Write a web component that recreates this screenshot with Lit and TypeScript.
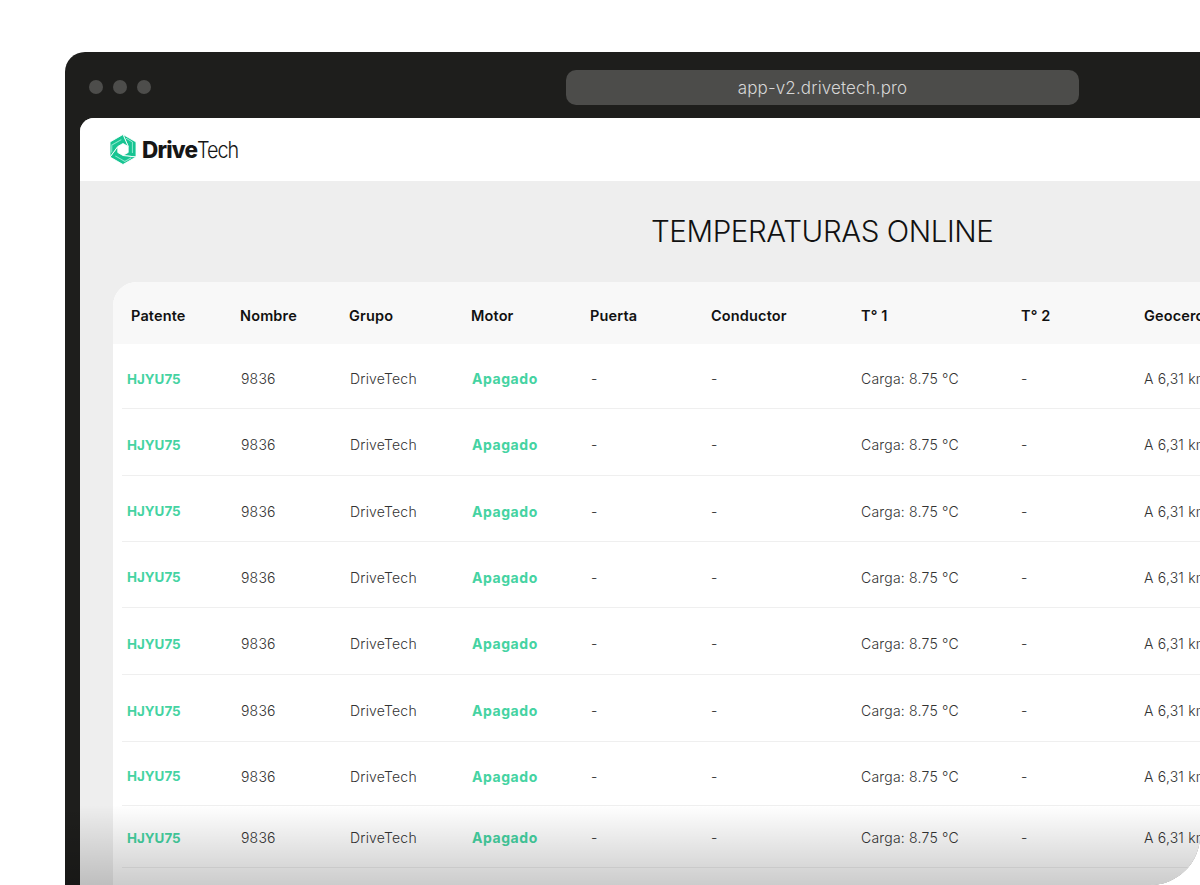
import { LitElement, html, css, svg } from "lit";
import { customElement } from "lit/decorators.js";

const ROWS = [65, 67, 66, 66, 67, 67, 64, 62];
const BAND = "14,.5 27,8 27,23 14,21.5 19.2,18.5 19.2,12.5";
const ANGLES = [0, 120, 240];

@customElement("app-root")
export class AppRoot extends LitElement {
  static styles = css`
    :host { display: block; width: 1200px; height: 885px; overflow: hidden; background: #fff; font-family: Inter, "Liberation Sans", sans-serif; position: relative; }
    .page { height: 885px; padding: 52px 0 0 65px; box-sizing: border-box; display: flex; }
    .frame { flex: 1; background: #1e1e1c; border-radius: 20px 0 50px 0; overflow: hidden; display: flex; flex-direction: column; position: relative; height: 833px; }
    .chrome { height: 66px; box-sizing: border-box; padding: 4px 0 0 24px; flex: none; display: flex; align-items: center; position: relative; gap: 10px; }
    .dot { width: 14px; height: 14px; border-radius: 50%; background: #4d4d4b; }
    .url { position: absolute; left: 501px; top: 18px; width: 513px; height: 35px; border-radius: 10px; background: #4c4c4a; color: #d6d6d6; font-size: 17px; letter-spacing: .13px; font-weight: 300; display: flex; align-items: center; justify-content: center; box-sizing: border-box; }
    .app { flex: 1; margin-left: 15px; background: #eeeeee; border-radius: 14px 0 0 0; overflow: hidden; }
    .top { height: 63px; background: #fff; display: flex; align-items: center; padding-left: 29px; gap: 5px; }
    .brand { font-size: 22.5px; color: #161616; letter-spacing: -.8px; font-weight: 800; }
    .brand span { display: inline-block; font-weight: 300; letter-spacing: -1.2px; transform: scaleX(.88); transform-origin: left center; }
    h1 { margin: 0; height: 101px; box-sizing: border-box; padding: 30px 0 0 571px; font-size: 29.5px; font-weight: 300; color: #111; line-height: 40px; white-space: nowrap; letter-spacing: -0.4px; }
    .card { margin-left: 33px; background: #fff; border-radius: 24px 0 0 0; overflow: hidden; }
    .row { display: grid; grid-template-columns: 114px 109px 122px 119px 120px 150px 160px 123px 100px; padding-left: 14px; align-items: center; white-space: nowrap; position: relative; font-size: 14px; font-weight: 300; color: #333; letter-spacing: .2px; box-sizing: border-box; }
    .head { height: 62px; padding-top: 5px; background: #f8f8f8; font-weight: 600; color: #111; font-size: 14.5px; letter-spacing: .15px; }
    .head div:first-child { padding-left: 4px; }
    .body { padding-top: 4px; }
    .body:nth-last-child(2) { padding-top: 1px; }
    .body::after { content: ""; position: absolute; left: 9px; right: 0; bottom: 0; height: 1px; background: #efefef; }
    .plate { color: #45d3a2; font-weight: 700; font-size: 13.4px; letter-spacing: 0; }
    .state { color: #45d3a2; font-weight: 700; letter-spacing: .55px; }
    .fade { position: absolute; left: 0; right: 0; bottom: 0; height: 80px; background: linear-gradient(to bottom, rgba(0,0,0,0), rgba(0,0,0,.2)); pointer-events: none; }
    .t { transform: translateX(-1px); }
    .filler { height: 40px; }
  `;

  render() {
    return html`<div class="page"><div class="frame">
      <div class="chrome">
        <div class="dot"></div><div class="dot"></div><div class="dot"></div>
        <div class="url">app-v2.drivetech.pro</div>
      </div>
      <div class="app">
        <div class="top">
          <svg width="28" height="31" viewBox="0 0 28 31">
            ${ANGLES.map((a) => svg`<g transform="rotate(${a} 14 15.5)">
              <polygon points=${BAND} fill="#17c492" stroke="#fff" stroke-width=".8"/>
              <polyline points="17,4.2 23.4,8 23.4,19" fill="none" stroke="#8fe9cf" stroke-width="1"/>
            </g>`)}
          </svg>
          <div class="brand">Drive<span>Tech</span></div>
        </div>
        <h1>TEMPERATURAS ONLINE</h1>
        <div class="card">
          <div class="row head">
            <div>Patente</div><div class="t">Nombre</div><div class="t">Grupo</div><div class="t">Motor</div><div class="t">Puerta</div><div>Conductor</div><div>T° 1</div><div>T° 2</div><div>Geocerca</div>
          </div>
          ${ROWS.map((h) => html`<div class="row body" style="height:${h}px">
            <div class="plate">HJYU75</div><div>9836</div><div>DriveTech</div><div class="state">Apagado</div><div>-</div><div>-</div><div>Carga: 8.75 °C</div><div>-</div><div>A 6,31 km</div>
          </div>`)}
          <div class="filler"></div>
        </div>
      </div>
      <div class="fade"></div>
    </div></div>`;
  }
}
